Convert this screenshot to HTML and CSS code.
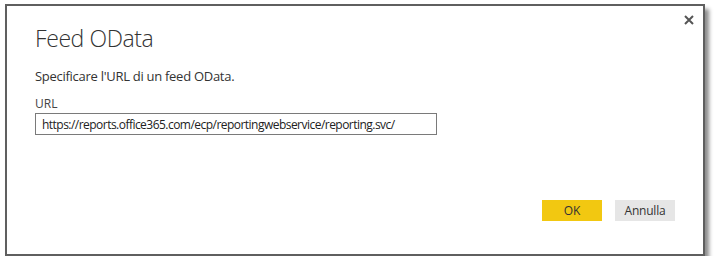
FILE: index.html
```html
<!DOCTYPE html>
<html lang="it">
<head>
    <meta charset="UTF-8">
    <meta name="viewport" content="width=device-width, initial-scale=1.0">
    <title>Feed OData</title>

    <link rel="stylesheet" href="styles.css">
</head>
<body>

    <div class="dialog">
        <div class="dialog-header">
            <h1>Feed OData</h1>
            <button class="close-btn" title="Chiudi">
                <svg width="10" height="10" viewBox="0 0 10 10">
                    <path d="M1 1 L9 9 M9 1 L1 9" stroke="#555" stroke-width="2" />
                </svg>
            </button>
        </div>

        <p class="intro">Specificare l'URL di un feed OData.</p>

        <label class="field-label" for="url">URL</label>
        <input class="url-input" id="url" type="text" value="https://reports.office365.com/ecp/reportingwebservice/reporting.svc/">

        <div class="dialog-footer">
            <button class="btn btn-ok">OK</button>
            <button class="btn btn-cancel">Annulla</button>
        </div>
    </div>

</body>
</html>
```

FILE: styles.css
```css
/* Reset */
* {
    margin: 0;
    padding: 0;
    box-sizing: border-box;
}

body {
    font-family: 'Open Sans', 'Noto Sans', sans-serif;
    background-color: #ffffff;
    color: #333;
    padding: 4px 0 0 5px;
}

/* Dialog box */
.dialog {
    width: 700px;
    height: 252px;
    border: 2px solid #5f5f5f;
    background-color: #ffffff;
    box-shadow: 4px 5px 4px rgba(0, 0, 0, 0.45);
    display: flex;
    flex-direction: column;
    padding: 0 28px 0 28px;
}

.dialog-header {
    display: flex;
    justify-content: space-between;
    align-items: flex-start;
    margin-right: -24px;
}

h1 {
    font-size: 23px;
    font-weight: 300;
    letter-spacing: -0.4px;
    color: #333;
    margin-top: 16px;
    line-height: 32px;
}

.close-btn {
    background: none;
    border: none;
    width: 20px;
    height: 20px;
    margin-top: 4px;
    display: flex;
    align-items: center;
    justify-content: center;
    cursor: pointer;
}

.intro {
    font-size: 13px;
    letter-spacing: -0.28px;
    margin-top: 13px;
    line-height: 18px;
}

.field-label {
    font-size: 12px;
    margin-top: 11px;
    line-height: 16px;
    color: #444;
}

.url-input {
    width: 402px;
    height: 22px;
    margin-top: 1px;
    border: 1px solid #7a7a7a;
    padding: 0 6px;
    font-family: inherit;
    font-size: 12px;
    letter-spacing: -0.53px;
    color: #222;
    outline: none;
}

/* Footer buttons */
.dialog-footer {
    display: flex;
    justify-content: flex-end;
    gap: 13px;
    margin-top: 65px;
}

.btn {
    height: 21px;
    width: 60px;
    border: none;
    font-family: inherit;
    font-size: 12px;
    letter-spacing: -0.2px;
    color: #333;
    cursor: pointer;
}

.btn-ok {
    background-color: #f2c811;
}

.btn-cancel {
    background-color: #e6e6e6;
}
```
